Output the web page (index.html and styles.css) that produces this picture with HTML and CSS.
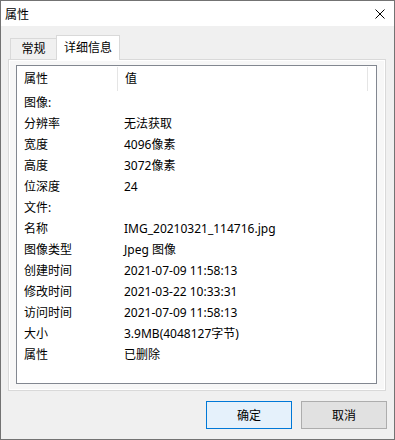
FILE: index.html
```html
<!DOCTYPE html>
<html lang="zh-CN">

<head>
    <meta charset="UTF-8">
    <title>属性</title>
    <link rel="stylesheet" href="styles.css">
</head>

<body>
    <div class="window">
        <div class="titlebar">
            <span class="title">属性</span>
            <span class="close">
                <svg width="10" height="10" viewBox="0 0 10 10">
                    <path d="M0.5 0.5 L9.5 9.5 M9.5 0.5 L0.5 9.5" stroke="#000" stroke-width="1" fill="none"/>
                </svg>
            </span>
        </div>
        <div class="body">
            <div class="tabs">
                <div class="tab">常规</div>
                <div class="tab active">详细信息</div>
            </div>
            <div class="panel">
                <div class="list">
                    <div class="list-head">
                        <div class="col1">属性</div>
                        <div class="col2">值</div>
                    </div>
                    <div class="row"><div class="col1">图像:</div><div class="col2"></div></div>
                    <div class="row"><div class="col1">分辨率</div><div class="col2">无法获取</div></div>
                    <div class="row"><div class="col1">宽度</div><div class="col2">4096像素</div></div>
                    <div class="row"><div class="col1">高度</div><div class="col2">3072像素</div></div>
                    <div class="row"><div class="col1">位深度</div><div class="col2">24</div></div>
                    <div class="row"><div class="col1">文件:</div><div class="col2"></div></div>
                    <div class="row"><div class="col1">名称</div><div class="col2">IMG_20210321_114716.jpg</div></div>
                    <div class="row"><div class="col1">图像类型</div><div class="col2">Jpeg 图像</div></div>
                    <div class="row"><div class="col1">创建时间</div><div class="col2">2021-07-09 11:58:13</div></div>
                    <div class="row"><div class="col1">修改时间</div><div class="col2">2021-03-22 10:33:31</div></div>
                    <div class="row"><div class="col1">访问时间</div><div class="col2">2021-07-09 11:58:13</div></div>
                    <div class="row"><div class="col1">大小</div><div class="col2">3.9MB(4048127字节)</div></div>
                    <div class="row"><div class="col1">属性</div><div class="col2">已删除</div></div>
                </div>
            </div>
            <div class="buttons">
                <button class="btn btn-default">确定</button>
                <button class="btn">取消</button>
            </div>
        </div>
    </div>
</body>

</html>
```

FILE: styles.css
```css
* {
    padding: 0;
    margin: 0;
    box-sizing: border-box;
}

body {
    font-family: "Noto Sans", "Noto Sans CJK SC", sans-serif;
    font-size: 12px;
    color: #000;
    background-color: #fff;
}

.window {
    width: 395px;
    height: 440px;
    border: 1px solid #737373;
    display: flex;
    flex-direction: column;
    background-color: #f0f0f0;
}

.titlebar {
    height: 25px;
    background-color: #fff;
    display: flex;
    align-items: center;
    justify-content: space-between;
    padding: 0 9px 0 4px;
}

.close {
    display: flex;
    width: 10px;
    height: 10px;
}

.body {
    flex: 1;
    padding: 9px 7px 0 7px;
    display: flex;
    flex-direction: column;
}

/* 选项卡 */
.tabs {
    display: flex;
    align-items: flex-end;
    height: 25px;
    padding-left: 2px;
    position: relative;
    z-index: 2;
    margin-bottom: -1px;
}

.tab {
    width: 47px;
    height: 21px;
    margin-bottom: 1px;
    line-height: 20px;
    text-align: center;
    border: 1px solid #d9d9d9;
    border-bottom: none;
    background-color: #f0f0f0;
}

.tab.active {
    width: 64px;
    height: 25px;
    margin-bottom: 0;
    line-height: 23px;
    margin-left: -1px;
    background-color: #fff;
}

.panel {
    height: 332px;
    margin-right: 1px;
    border: 1px solid #d9d9d9;
    background-color: #f7f7f7;
    box-shadow: inset 1px 1px 0 #fff, inset -1px -1px 0 #fff;
    padding: 5px 8px 6px 7px;
}

/* 列表 */
.list {
    height: 100%;
    border: 1px solid #828790;
    background-color: #fff;
}

.list-head {
    display: flex;
    height: 26px;
    align-items: center;
}

.list-head .col1,
.list-head .col2 {
    height: 24px;
    line-height: 24px;
    border-right: 1px solid #e5e5e5;
}

.list-head .col1 {
    width: 101px;
}

.list-head .col2 {
    width: 250px;
}

.row {
    display: flex;
    height: 21px;
    line-height: 21px;
}

.col1 {
    width: 100px;
    padding-left: 7px;
}

.col2 {
    padding-left: 7px;
}

.buttons {
    display: flex;
    justify-content: flex-end;
    gap: 9px;
    margin-top: 10px;
}

.btn {
    width: 86px;
    height: 28px;
    font-family: inherit;
    font-size: 12px;
    color: #000;
    background-color: #e1e1e1;
    border: 1px solid #adadad;
}

.btn-default {
    background-color: #e5f1fb;
    border-color: #0078d7;
}
```
